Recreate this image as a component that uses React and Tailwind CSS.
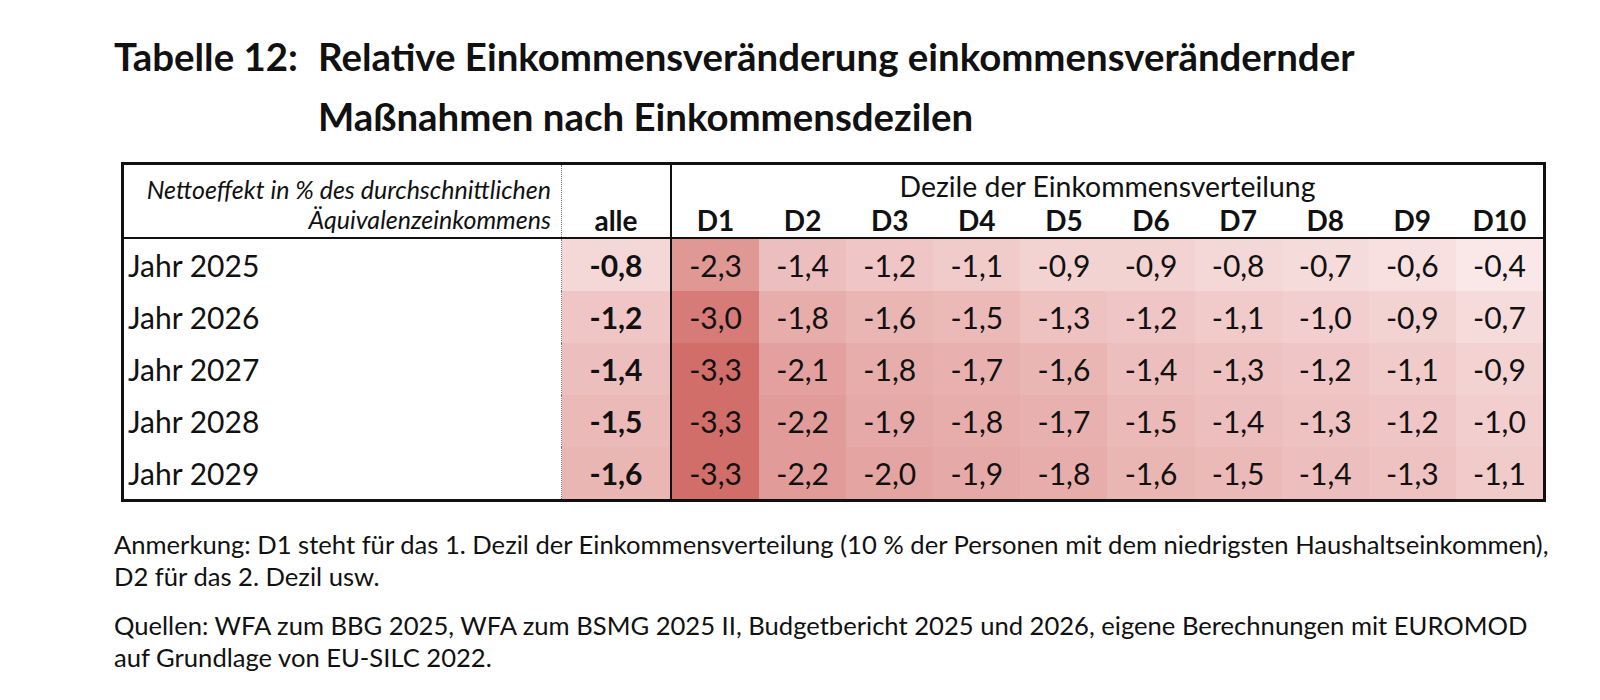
import React from "react";

// Tabelle 12 – Heatmap der relativen Einkommensveränderung
const rows = [
  { label: "Jahr 2025", alle: -0.8, d: [-2.3, -1.4, -1.2, -1.1, -0.9, -0.9, -0.8, -0.7, -0.6, -0.4] },
  { label: "Jahr 2026", alle: -1.2, d: [-3.0, -1.8, -1.6, -1.5, -1.3, -1.2, -1.1, -1.0, -0.9, -0.7] },
  { label: "Jahr 2027", alle: -1.4, d: [-3.3, -2.1, -1.8, -1.7, -1.6, -1.4, -1.3, -1.2, -1.1, -0.9] },
  { label: "Jahr 2028", alle: -1.5, d: [-3.3, -2.2, -1.9, -1.8, -1.7, -1.5, -1.4, -1.3, -1.2, -1.0] },
  { label: "Jahr 2029", alle: -1.6, d: [-3.3, -2.2, -2.0, -1.9, -1.8, -1.6, -1.5, -1.4, -1.3, -1.1] },
];

const deciles = ["D1", "D2", "D3", "D4", "D5", "D6", "D7", "D8", "D9", "D10"];

// Farbskala wie in Excel: hell (-0,4) bis kräftig rot (-3,3)
const heat = (v) => {
  const t = Math.min(1, Math.max(0, (Math.abs(v) - 0.4) / 2.9));
  const from = [250, 232, 232];
  const to = [210, 110, 106];
  const c = from.map((f, i) => Math.round(f + (to[i] - f) * t));
  return `rgb(${c[0]}, ${c[1]}, ${c[2]})`;
};

const fmt = (v) => v.toFixed(1).replace(".", ",");

export default function App() {
  return (
    <div className="min-h-[700px] bg-white font-['Lato',sans-serif] text-[#111]">
      <div className="pl-[114px] pt-[26px]">
        {/* Titel */}
        <div className="flex text-[38.4px] font-bold leading-[60px]">
          <div className="w-[204px] shrink-0">Tabelle 12:</div>
          <div>
            Relative Einkommensveränderung einkommensverändernder
            <br />
            Maßnahmen nach Einkommensdezilen
          </div>
        </div>

        {/* Tabelle */}
        <div className="mt-[16px] ml-[7px] w-[1425px] border-[3px] border-[#111]">
          {/* Kopfzeile */}
          <div className="grid h-[74px] grid-cols-[438px_110px_minmax(0,1fr)] border-b-2 border-[#111]">
            <div className="flex flex-col items-end justify-end border-r border-dotted border-[#777] pr-[10px] pb-[3px] text-[25px] italic leading-[30px]">
              <span>Nettoeffekt in % des durchschnittlichen</span>
              <span>Äquivalenzeinkommens</span>
            </div>
            <div className="flex items-end justify-center border-r-2 border-[#111] pb-[2px] text-[28px] font-bold leading-[30px]">
              alle
            </div>
            <div className="flex flex-col justify-end pb-[2px]">
              <div className="mb-[4px] text-center text-[28.4px] leading-[30px]">
                Dezile der Einkommensverteilung
              </div>
              <div className="grid grid-cols-10 text-[28px] font-bold leading-[30px]">
                {deciles.map((d) => (
                  <div key={d} className="text-center">
                    {d}
                  </div>
                ))}
              </div>
            </div>
          </div>

          {/* Datenzeilen */}
          {rows.map((r) => (
            <div key={r.label} className="grid h-[52px] grid-cols-[438px_110px_minmax(0,1fr)] text-[30px] leading-none">
              <div className="flex items-center border-r border-dotted border-[#777] pl-[4px]">
                {r.label}
              </div>
              <div
                className="flex items-center justify-center border-r-2 border-[#111] font-bold"
                style={{ backgroundColor: heat(r.alle) }}
              >
                {fmt(r.alle)}
              </div>
              <div className="grid grid-cols-10">
                {r.d.map((v, i) => (
                  <div
                    key={i}
                    className="flex items-center justify-center"
                    style={{ backgroundColor: heat(v) }}
                  >
                    {fmt(v)}
                  </div>
                ))}
              </div>
            </div>
          ))}
        </div>

        {/* Anmerkungen */}
        <div className="mt-[26px] text-[25.6px] leading-[32px]">
          <p>
            Anmerkung: D1 steht für das 1. Dezil der Einkommensverteilung (10 % der Personen mit dem niedrigsten Haushaltseinkommen),
            <br />
            D2 für das 2. Dezil usw.
          </p>
          <p className="mt-[17px]">
            Quellen: WFA zum BBG 2025, WFA zum BSMG 2025 II, Budgetbericht 2025 und 2026, eigene Berechnungen mit EUROMOD
            <br />
            auf Grundlage von EU-SILC 2022.
          </p>
        </div>
      </div>
    </div>
  );
}
